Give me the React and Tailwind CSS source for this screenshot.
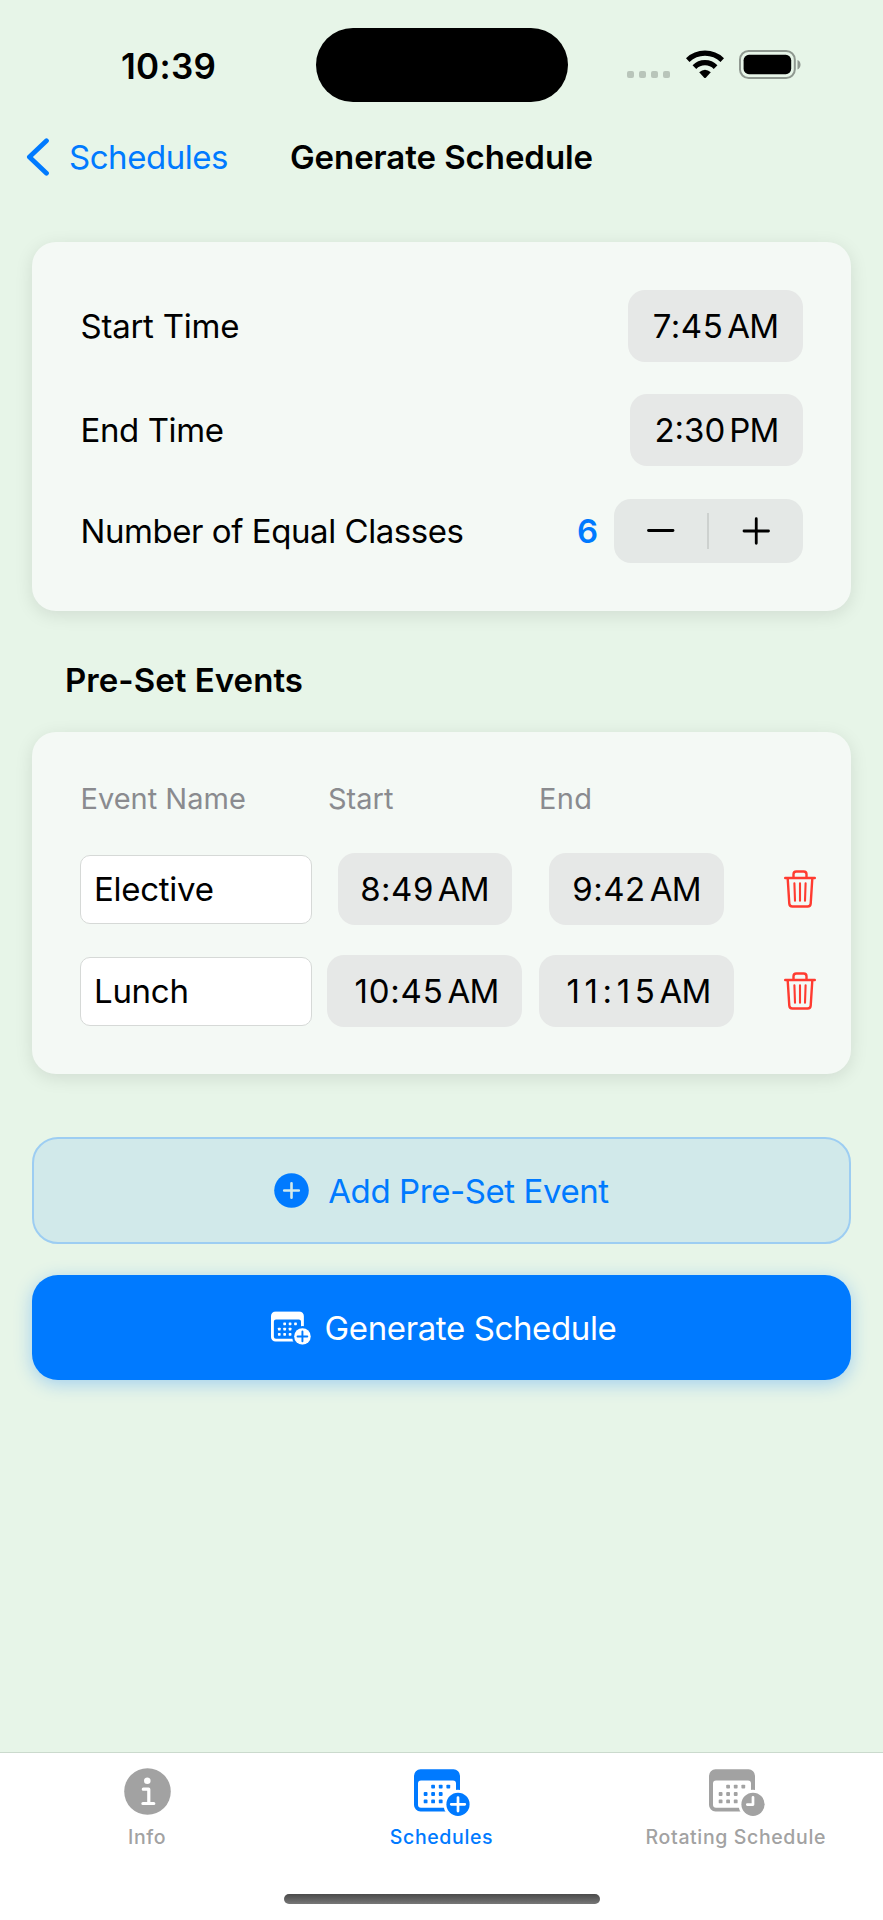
import React, { useId } from "react";

function StatusBar() {
  return (
    <div className="relative flex h-[131px] items-center">
      <span className="ml-[121px] text-[35px] leading-[44px] font-semibold tracking-[0.3px]">10:39</span>
      <div className="absolute left-[315.5px] top-7 h-[74px] w-[252px] rounded-full bg-black" />
      <div className="absolute left-[627px] top-[50px] flex items-start">
        <div className="mt-[21px] flex gap-[5px]">
          <i className="h-[7px] w-[7px] rounded-[2px] bg-[#b9c5ba]" />
          <i className="h-[7px] w-[7px] rounded-[2px] bg-[#b9c5ba]" />
          <i className="h-[7px] w-[7px] rounded-[2px] bg-[#b9c5ba]" />
          <i className="h-[7px] w-[7px] rounded-[2px] bg-[#b9c5ba]" />
        </div>
        <svg className="ml-4 h-[29px] w-[38px]" viewBox="0 0 38 29" fill="none" stroke="#000" strokeWidth="5.2">
          <path d="M1.7 10.1A25 25 0 0 1 36.3 10.1" />
          <path d="M8.4 17.1A15 15 0 0 1 29.6 17.1" />
          <path d="M13.2 22.3Q19 17.2 24.8 22.3L19.8 27.7Q19 28.4 18.2 27.7Z" fill="#000" stroke="none" />
        </svg>
        <svg className="ml-[15px] h-[29px] w-[63px]" viewBox="0 0 63 29">
          <rect x="1" y="1" width="54.800" height="27" rx="8.600" fill="none" stroke="#8f9890" strokeWidth="2" />
          <rect x="4.600" y="4.800" width="47.600" height="19.400" rx="5.400" fill="#000" />
          <path d="M58.500 10v9.400c2-.8 3-2.600 3-4.700S60.500 10.800 58.500 10Z" fill="#8f9890" />
        </svg>
      </div>
    </div>
  );
}

function Time({ value, half, className = "", digits = "tracking-[0.5px]" }) {
  return (
    <div className={`flex h-[72px] items-center justify-center rounded-[17px] bg-[#e6e8e7] pt-[2px] text-[33px] ${className}`}>
      <span className={digits}>{value}</span>
      <span className="ml-1 tracking-[-0.8px]">{half}</span>
    </div>
  );
}

function CalendarIcon({ kind = "plus", className }) {
  const id = useId();
  return (
    <svg className={className} viewBox="0 0 56 47" fill="currentColor">
      <mask id={id}>
        <rect width="56" height="47" fill="#fff" />
        <circle cx="44" cy="35.3" r="14.6" fill="#000" />
      </mask>
      <g mask={`url(#${id})`}>
        <path
          fillRule="evenodd"
          d="M6.500 0.300H39.500A6.500 6.500 0 0 1 46 6.800V36A6.500 6.500 0 0 1 39.500 42.500H6.500A6.500 6.500 0 0 1 0 36V6.800A6.500 6.500 0 0 1 6.500 0.300ZM7 11.500A3 3 0 0 0 4 14.500V35.700A3 3 0 0 0 7 38.700H39A3 3 0 0 0 42 35.700V14.500A3 3 0 0 0 39 11.500Z"
        />
        {[[19.1, 17.6], [26.7, 17.6], [34.3, 17.6], [11.6, 25], [19.1, 25], [26.7, 25], [11.6, 32.4], [19.1, 32.4], [26.7, 32.4]].map(
          ([x, y]) => (
            <rect key={`${x}-${y}`} x={x - 1.9} y={y - 1.9} width="3.8" height="3.8" rx="0.9" />
          )
        )}
      </g>
      <mask id={`${id}b`}>
        <rect width="56" height="47" fill="#fff" />
        <path
          d={kind === "plus" ? "M44 28.500V42.100M37.200 35.300H50.800" : "M44 28.300V35.600H38.300"}
          fill="none"
          stroke="#000"
          strokeWidth="2.7"
          strokeLinecap="round"
          strokeLinejoin="round"
        />
      </mask>
      <circle cx="44" cy="35.3" r="11.6" mask={`url(#${id}b)`} />
    </svg>
  );
}

function TrashIcon() {
  return (
    <svg className="h-[38px] w-8" viewBox="0 0 32 38" fill="none" stroke="#ff3b30" strokeWidth="2.4" strokeLinecap="round" strokeLinejoin="round">
      <path d="M1.200 8H30.800M9.500 7.500V4.300Q9.500 1.500 12.300 1.500H19.700Q22.500 1.500 22.500 4.300V7.500" />
      <path d="M3.700 8.500L5.300 33.600Q5.500 36.500 8.400 36.500H23.600Q26.500 36.500 26.700 33.600L28.300 8.500" />
      <path d="M10.400 13.200L11 30.800M16 13.200V30.800M21.600 13.200L21 30.800" strokeWidth="2.1" />
    </svg>
  );
}

function EventRow({ name, start, end }) {
  return (
    <div className="grid grid-cols-[232px_195px_195px_32px] items-center">
      <div className="flex h-[69px] items-center rounded-[10px] border border-[#d6d9d7] bg-white pt-[2px] pl-[13px] text-[33px] tracking-[-0.28px]">
        {name}
      </div>
      <div className="ml-[15px] flex w-[195px] justify-center">
        <Time {...start} />
      </div>
      <div className="ml-8 flex w-[195px] justify-center">
        <Time {...end} />
      </div>
      <div className="ml-[82px]">
        <TrashIcon />
      </div>
    </div>
  );
}

function Tab({ label, active, children }) {
  return (
    <div className={`flex flex-1 flex-col items-center ${active ? "text-[#007aff]" : "text-[#a2a2a2]"}`}>
      <div className="mt-[15px] flex h-[48px] items-start">{children}</div>
      <span className="mt-[9px] text-[19.5px] leading-6 font-medium tracking-[0.63px]">{label}</span>
    </div>
  );
}

const card = "rounded-[24px] bg-[#f4f9f5] shadow-[0_4px_18px_rgba(0,0,0,0.1)]";

export default function App() {
  return (
    <div className="flex h-[1920px] w-[883px] flex-col bg-[#e7f5e8] font-['Inter',sans-serif] text-black">
      <StatusBar />
      <header className="relative flex h-[52px] items-center justify-center">
        <div className="absolute left-[25px] top-0 flex h-[52px] items-center text-[#007aff]">
          <svg className="h-[38px] w-[25px]" viewBox="0 0 25 38" fill="none" stroke="currentColor" strokeWidth="4.8" strokeLinecap="round" strokeLinejoin="round">
            <path d="M21.500 2.800L4.400 19L21.500 35.200" />
          </svg>
          <span className="ml-[19px] pt-[2px] text-[33px] tracking-[-0.47px]">Schedules</span>
        </div>
        <h1 className="pt-[2px] text-[33px] font-semibold tracking-[-0.06px]">Generate Schedule</h1>
      </header>

      <main className="mt-[59px] flex flex-1 flex-col px-8">
        <section className={`px-12 pt-12 pb-12 text-[33px] ${card}`}>
          <div className="flex h-[72px] items-center justify-between">
            <span className="pt-[2px] pl-[0.5px] tracking-[-0.25px]">Start Time</span>
            <Time value="7:45" half="AM" className="w-[175px]" />
          </div>
          <div className="mt-8 flex h-[72px] items-center justify-between">
            <span className="pt-[2px] pl-[0.5px] tracking-[-0.4px]">End Time</span>
            <Time value="2:30" half="PM" className="w-[173px]" digits="tracking-[0px]" />
          </div>
          <div className="mt-[33px] flex h-16 items-center">
            <span className="pt-[2px] pl-[0.5px] tracking-[-0.44px]">Number of Equal Classes</span>
            <span className="ml-auto pt-[2px] font-semibold text-[#007aff]">6</span>
            <div className="ml-4 flex h-16 w-[189px] items-center rounded-[17px] bg-[#e4e8e6]">
              <svg className="h-8 w-[93px]" viewBox="0 0 93 32" stroke="#000" strokeWidth="2.8" strokeLinecap="round">
                <path d="M34.500 15.500H59" />
              </svg>
              <div className="h-9 w-[2px] bg-[#cdd1cf]" />
              <svg className="h-8 w-[94px]" viewBox="0 0 94 32" stroke="#000" strokeWidth="2.8" strokeLinecap="round">
                <path d="M35 16H59.500M47.250 3.750V28.250" />
              </svg>
            </div>
          </div>
        </section>

        <h2 className="mt-[49px] pl-[33px] text-[33px] leading-10 font-semibold tracking-[0.04px]">Pre-Set Events</h2>

        <section className={`mt-8 pt-[47px] pr-4 pb-[47px] pl-12 ${card}`}>
          <div className="grid grid-cols-[247px_211px_auto] text-[29px] leading-10 text-[#8a8b8f]">
            <span className="pl-[0.5px]">Event Name</span>
            <span className="pl-px">Start</span>
            <span className="pl-px tracking-[0.3px]">End</span>
          </div>
          <div className="mt-[34px] flex flex-col gap-[30px]">
            <EventRow name="Elective" start={{ value: "8:49", half: "AM", className: "w-[174px]" }} end={{ value: "9:42", half: "AM", className: "w-[175px]" }} />
            <EventRow
              name="Lunch"
              start={{ value: "10:45", half: "AM", className: "w-[195px] pl-1", digits: "tracking-[0.8px]" }}
              end={{ value: "11:15", half: "AM", className: "w-[195px] pl-1", digits: "tracking-[4.6px] -mr-1" }}
            />
          </div>
        </section>

        <button className="mt-[63px] flex h-[107px] items-center justify-center rounded-[26px] border-2 border-[#9dcdf2] bg-[#d1e9ea] text-[33px] tracking-[-0.42px] text-[#007aff]">
          <svg className="mr-[19px] h-[35px] w-[35px]" viewBox="0 0 35 35">
            <circle cx="17.5" cy="17.5" r="17.3" fill="currentColor" />
            <path d="M17.500 10.200V24.800M10.200 17.500H24.800" stroke="#d1e9ea" strokeWidth="2.6" strokeLinecap="round" />
          </svg>
          <span className="pt-[2px]">Add Pre-Set Event</span>
        </button>

        <button className="mt-[31px] flex h-[105px] items-center justify-center rounded-[26px] bg-[#007aff] pl-1 text-[33px] tracking-[-0.38px] text-white shadow-[0_4px_18px_rgba(0,122,255,0.3)]">
          <CalendarIcon className="mr-[14px] h-[34px] w-[40px]" />
          <span className="pt-[2px]">Generate Schedule</span>
        </button>
      </main>

      <nav className="flex h-[168px] flex-col border-t border-[#cbdacd] bg-white">
        <div className="flex flex-1">
          <Tab label="Info">
            <svg className="h-[47px] w-[47px]" viewBox="0 0 47 47">
              <circle cx="23.5" cy="23.5" r="23.3" fill="currentColor" />
              <circle cx="23.3" cy="12.8" r="3.3" fill="#fff" />
              <path d="M19.300 21.200H24.800V35.300M18.900 35.500H29.800" fill="none" stroke="#fff" strokeWidth="3.2" strokeLinecap="round" strokeLinejoin="round" />
            </svg>
          </Tab>
          <Tab label="Schedules" active>
            <CalendarIcon className="mt-px ml-px h-[47px] w-[56px]" />
          </Tab>
          <Tab label="Rotating Schedule">
            <CalendarIcon kind="clock" className="mt-px ml-[2px] h-[47px] w-[56px]" />
          </Tab>
        </div>
        <div className="mb-4 h-[10px] w-[316px] self-center rounded-full bg-linear-to-b from-[#4a4a4a] to-[#777777]" />
      </nav>
    </div>
  );
}
